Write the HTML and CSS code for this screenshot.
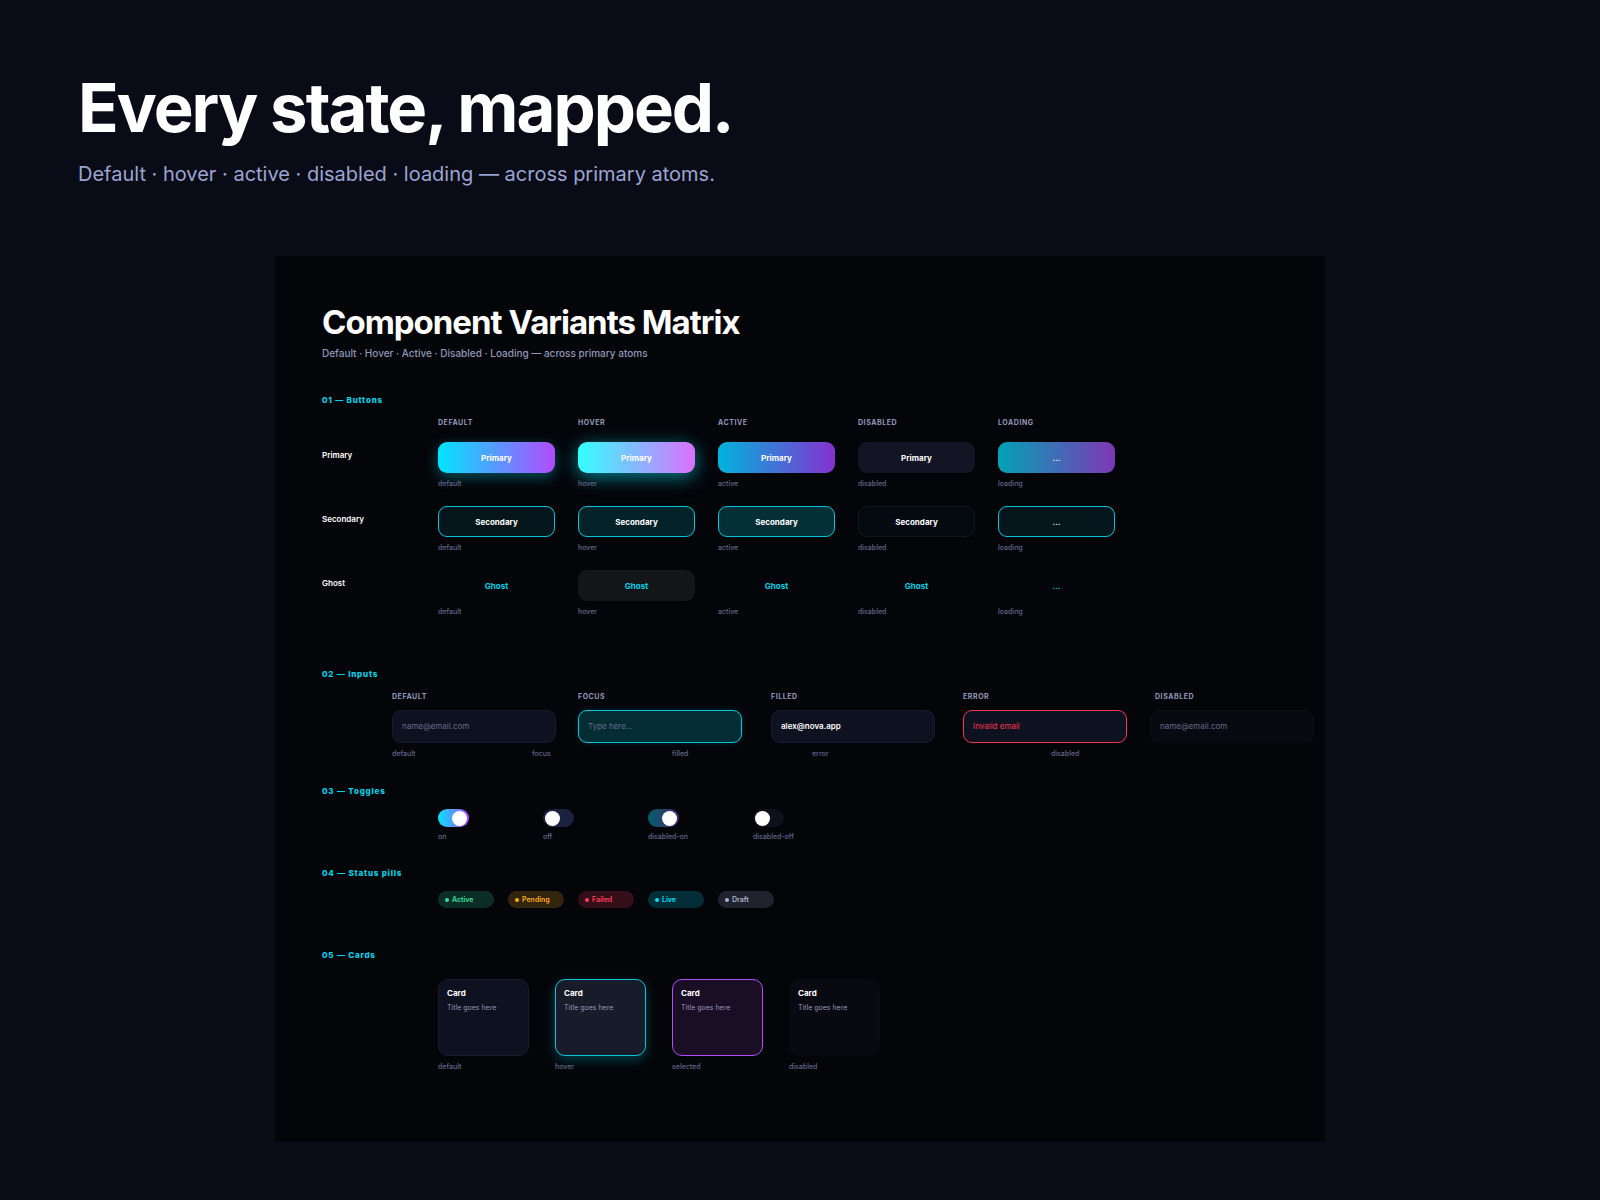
FILE: index.html
```html
<!DOCTYPE html>
<html lang="en">
<head>
    <meta charset="UTF-8">
    <meta name="viewport" content="width=device-width, initial-scale=1.0">
    <title>Component Variants Matrix</title>
    <link rel="stylesheet" href="styles.css">
</head>
<body>
    <header class="page-header">
        <h1>Every state, mapped.</h1>
        <p>Default · hover · active · disabled · loading — across primary atoms.</p>
    </header>

    <main class="board">
        <h2>Component Variants Matrix</h2>
        <p class="board-subtitle">Default · Hover · Active · Disabled · Loading — across primary atoms</p>

        <!-- Buttons -->
        <section class="section">
            <h3>01 — Buttons</h3>
            <div class="button-grid column-heads">
                <span></span>
                <span>DEFAULT</span>
                <span>HOVER</span>
                <span>ACTIVE</span>
                <span>DISABLED</span>
                <span>LOADING</span>
            </div>
            <div class="button-rows">
                <div class="button-grid">
                    <span class="row-label">Primary</span>
                    <div class="cell"><button class="btn primary">Primary</button><span class="caption">default</span></div>
                    <div class="cell"><button class="btn primary is-hover">Primary</button><span class="caption">hover</span></div>
                    <div class="cell"><button class="btn primary is-active">Primary</button><span class="caption">active</span></div>
                    <div class="cell"><button class="btn primary is-disabled" disabled>Primary</button><span class="caption">disabled</span></div>
                    <div class="cell"><button class="btn primary is-loading">...</button><span class="caption">loading</span></div>
                </div>
                <div class="button-grid">
                    <span class="row-label">Secondary</span>
                    <div class="cell"><button class="btn secondary">Secondary</button><span class="caption">default</span></div>
                    <div class="cell"><button class="btn secondary is-hover">Secondary</button><span class="caption">hover</span></div>
                    <div class="cell"><button class="btn secondary is-active">Secondary</button><span class="caption">active</span></div>
                    <div class="cell"><button class="btn secondary is-disabled" disabled>Secondary</button><span class="caption">disabled</span></div>
                    <div class="cell"><button class="btn secondary is-loading">...</button><span class="caption">loading</span></div>
                </div>
                <div class="button-grid">
                    <span class="row-label">Ghost</span>
                    <div class="cell"><button class="btn ghost">Ghost</button><span class="caption">default</span></div>
                    <div class="cell"><button class="btn ghost is-hover">Ghost</button><span class="caption">hover</span></div>
                    <div class="cell"><button class="btn ghost is-active">Ghost</button><span class="caption">active</span></div>
                    <div class="cell"><button class="btn ghost is-disabled" disabled>Ghost</button><span class="caption">disabled</span></div>
                    <div class="cell"><button class="btn ghost is-loading">...</button><span class="caption">loading</span></div>
                </div>
            </div>
        </section>

        <!-- Inputs -->
        <section class="section section-inputs">
            <h3>02 — Inputs</h3>
            <div class="input-heads column-heads">
                <label for="inputDefault">DEFAULT</label>
                <label for="inputFocus">FOCUS</label>
                <label for="inputFilled">FILLED</label>
                <label for="inputError">ERROR</label>
                <label for="inputDisabled">DISABLED</label>
            </div>
            <div class="input-row">
                <input class="field" id="inputDefault" type="text" placeholder="name@email.com">
                <input class="field is-focus" id="inputFocus" type="text" placeholder="Type here...">
                <input class="field is-filled" id="inputFilled" type="text" value="alex@nova.app">
                <input class="field is-error" id="inputError" type="text" value="Invalid email">
                <input class="field is-disabled" id="inputDisabled" type="text" placeholder="name@email.com" disabled>
            </div>
            <div class="input-captions">
                <span class="caption">default</span>
                <span class="caption">focus</span>
                <span class="caption">filled</span>
                <span class="caption">error</span>
                <span class="caption">disabled</span>
            </div>
        </section>

        <!-- Toggles -->
        <section class="section section-toggles">
            <h3>03 — Toggles</h3>
            <div class="toggle-row">
                <div class="toggle-cell">
                    <input class="toggle" id="toggleOn" type="checkbox" checked>
                    <label class="caption" for="toggleOn">on</label>
                </div>
                <div class="toggle-cell">
                    <input class="toggle" id="toggleOff" type="checkbox">
                    <label class="caption" for="toggleOff">off</label>
                </div>
                <div class="toggle-cell">
                    <input class="toggle" id="toggleDisabledOn" type="checkbox" checked disabled>
                    <label class="caption" for="toggleDisabledOn">disabled-on</label>
                </div>
                <div class="toggle-cell">
                    <input class="toggle" id="toggleDisabledOff" type="checkbox" disabled>
                    <label class="caption" for="toggleDisabledOff">disabled-off</label>
                </div>
            </div>
        </section>

        <!-- Status pills -->
        <section class="section section-pills">
            <h3>04 — Status pills</h3>
            <div class="pill-row">
                <span class="pill active">Active</span>
                <span class="pill pending">Pending</span>
                <span class="pill failed">Failed</span>
                <span class="pill live">Live</span>
                <span class="pill draft">Draft</span>
            </div>
        </section>

        <!-- Cards -->
        <section class="section section-cards">
            <h3>05 — Cards</h3>
            <div class="card-row">
                <div class="cell">
                    <article class="card"><h4>Card</h4><p>Title goes here</p></article>
                    <span class="caption">default</span>
                </div>
                <div class="cell">
                    <article class="card is-hover"><h4>Card</h4><p>Title goes here</p></article>
                    <span class="caption">hover</span>
                </div>
                <div class="cell">
                    <article class="card is-selected"><h4>Card</h4><p>Title goes here</p></article>
                    <span class="caption">selected</span>
                </div>
                <div class="cell">
                    <article class="card is-disabled"><h4>Card</h4><p>Title goes here</p></article>
                    <span class="caption">disabled</span>
                </div>
            </div>
        </section>
    </main>
</body>
</html>
```

FILE: styles.css
```css
* {
    box-sizing: border-box;
}

body {
    margin: 0;
    padding: 68px 78px 58px;
    min-height: 100vh;
    background-color: #090b16;
    color: #fff;
    font-family: Inter, "Liberation Sans", sans-serif;
}

h1, h2, h3, h4, p {
    margin: 0;
}

/* Page header */
.page-header {
    margin-bottom: 67px;
}

.page-header h1 {
    font-size: 67px;
    line-height: 80px;
    font-weight: 700;
    letter-spacing: -2px;
}

.page-header p {
    margin-top: 12px;
    font-size: 20px;
    line-height: 29px;
    color: #9ba5d2;
}

/* Board */
.board {
    max-width: 1050px;
    margin: 0 auto;
    padding: 46px 11px 70px 47px;
    background-color: #040509;
}

.board h2 {
    font-size: 33px;
    line-height: 40px;
    font-weight: 700;
    letter-spacing: -1px;
}

.board-subtitle {
    margin-top: 3px;
    font-size: 10px;
    line-height: 16px;
    font-weight: 500;
    color: #9297b8;
}

.section {
    margin-top: 33px;
}

.section-inputs {
    margin-top: 51px;
}

.section-toggles {
    margin-top: 26px;
}

.section-pills {
    margin-top: 25px;
}

.section-cards {
    margin-top: 41px;
}

.section h3 {
    font-size: 8px;
    line-height: 12px;
    font-weight: 800;
    letter-spacing: 0.1em;
    color: #00d4ea;
}

.column-heads {
    margin-top: 11px;
    font-size: 7px;
    line-height: 12px;
    font-weight: 700;
    letter-spacing: 0.08em;
    color: #9297b8;
}

.caption {
    font-size: 7px;
    line-height: 10px;
    font-weight: 500;
    color: #62678a;
}

.cell {
    display: flex;
    flex-direction: column;
    gap: 6px;
}

/* Buttons */
.button-grid {
    display: grid;
    grid-template-columns: 93px repeat(5, 117px);
    column-gap: 23px;
}

.button-rows {
    display: flex;
    flex-direction: column;
    gap: 17px;
    margin-top: 13px;
}

.row-label {
    font-size: 8px;
    line-height: 26px;
    font-weight: 600;
}

.btn {
    height: 31px;
    padding: 0;
    border: 1px solid transparent;
    border-radius: 9px;
    background: none;
    color: #fff;
    font-family: inherit;
    font-size: 8px;
    font-weight: 700;
    cursor: pointer;
}

.btn.primary {
    border: none;
    background: linear-gradient(90deg, #00e5ff, #b14cff);
    box-shadow: 0 4px 14px rgba(0, 229, 255, 0.35);
}

.btn.primary.is-hover {
    background: linear-gradient(90deg, #33ffff, #dc70ff);
    box-shadow: 0 4px 18px rgba(0, 229, 255, 0.55);
}

.btn.primary.is-active {
    background: linear-gradient(90deg, #00b4dc, #8530d0);
    box-shadow: none;
}

.btn.primary.is-disabled {
    background: #131424;
    box-shadow: none;
}

.btn.primary.is-loading {
    background: linear-gradient(90deg, #02a2b5, #7e37b5);
    box-shadow: none;
}

.btn.secondary {
    border-color: #05c6db;
    background-color: #04161b;
}

.btn.secondary.is-hover {
    background-color: #042329;
}

.btn.secondary.is-active {
    background-color: #042f37;
}

.btn.secondary.is-disabled {
    border-color: #10171d;
    background-color: #030a10;
}

.btn.ghost {
    color: #00d4ea;
}

.btn.ghost.is-hover {
    background-color: #141518;
}

.btn.is-disabled {
    cursor: not-allowed;
}

/* Inputs */
.input-heads {
    display: grid;
    grid-template-columns: 186px 193px 192px 192px auto;
    margin-left: 70px;
}

.input-row {
    display: grid;
    grid-template-columns: 186px 193px 192px 187px auto;
    margin-top: 7px;
    margin-left: 70px;
}

.input-captions {
    display: grid;
    grid-template-columns: 140px 140px 140px 239px auto;
    margin-top: 6px;
    margin-left: 70px;
}

.field {
    width: 164px;
    height: 33px;
    padding: 0 9px 2px;
    border: 1px solid #171b32;
    border-radius: 9px;
    background-color: #0e111f;
    color: #fff;
    font-family: inherit;
    font-size: 8px;
    outline: none;
}

.field::placeholder {
    color: #656a8a;
    opacity: 1;
}

.field.is-focus {
    border-color: #05c6db;
    background-color: #042c33;
    box-shadow: 0 0 6px rgba(0, 229, 255, 0.15);
}

.field.is-filled {
    font-weight: 600;
}

.field.is-error {
    border-color: #f03850;
    color: #f03850;
}

.field.is-disabled {
    border-color: #0a0c15;
    background-color: #080911;
}

/* Toggles */
.toggle-row {
    display: grid;
    grid-template-columns: repeat(4, 105px);
    margin-top: 12px;
    margin-left: 116px;
}

.toggle-cell {
    display: flex;
    flex-direction: column;
    align-items: flex-start;
    gap: 5px;
}

.toggle {
    display: flex;
    align-items: center;
    appearance: none;
    width: 31px;
    height: 18px;
    margin: 0;
    padding: 0 2px;
    border-radius: 9px;
    background-color: #1d2140;
}

.toggle::before {
    content: "";
    width: 15px;
    height: 15px;
    border-radius: 50%;
    background-color: #fff;
}

.toggle:checked {
    justify-content: flex-end;
    background: linear-gradient(90deg, #00e5ff, #b14cff);
}

.toggle:disabled {
    background-color: #0e101d;
}

.toggle:checked:disabled {
    background: linear-gradient(90deg, #025f6b, #4a2570);
}

/* Status pills */
.pill-row {
    display: flex;
    gap: 14px;
    margin-top: 12px;
    margin-left: 116px;
}

.pill {
    display: flex;
    align-items: center;
    gap: 3px;
    width: 56px;
    height: 17px;
    padding-left: 7px;
    border-radius: 9px;
    font-size: 7px;
    font-weight: 600;
}

.pill::before {
    content: "";
    width: 4px;
    height: 4px;
    border-radius: 50%;
    background-color: currentColor;
}

.pill.active {
    background-color: #0b2d25;
    color: #33e09e;
}

.pill.pending {
    background-color: #33240d;
    color: #ffab1e;
}

.pill.failed {
    background-color: #340f19;
    color: #ff405a;
}

.pill.live {
    background-color: #042e37;
    color: #00e0f8;
}

.pill.draft {
    background-color: #21222d;
    color: #adb2ce;
}

/* Cards */
.card-row {
    display: grid;
    grid-template-columns: repeat(4, 91px);
    column-gap: 26px;
    margin-top: 18px;
    margin-left: 116px;
}

.card {
    height: 77px;
    padding: 7px 8px;
    border: 1px solid #181b32;
    border-radius: 10px;
    background-color: #0e111f;
}

.card h4 {
    font-size: 8px;
    line-height: 12px;
    font-weight: 700;
}

.card p {
    margin-top: 4px;
    font-size: 7px;
    line-height: 10px;
    color: #9297b8;
}

.card.is-hover {
    border-color: #05c6db;
    background-color: #181b29;
    box-shadow: 0 4px 12px rgba(0, 229, 255, 0.25);
}

.card.is-selected {
    border-color: #b14cff;
    background-color: #1a0e25;
}

.card.is-disabled {
    border-color: #090b13;
    background-color: #080911;
}
```
